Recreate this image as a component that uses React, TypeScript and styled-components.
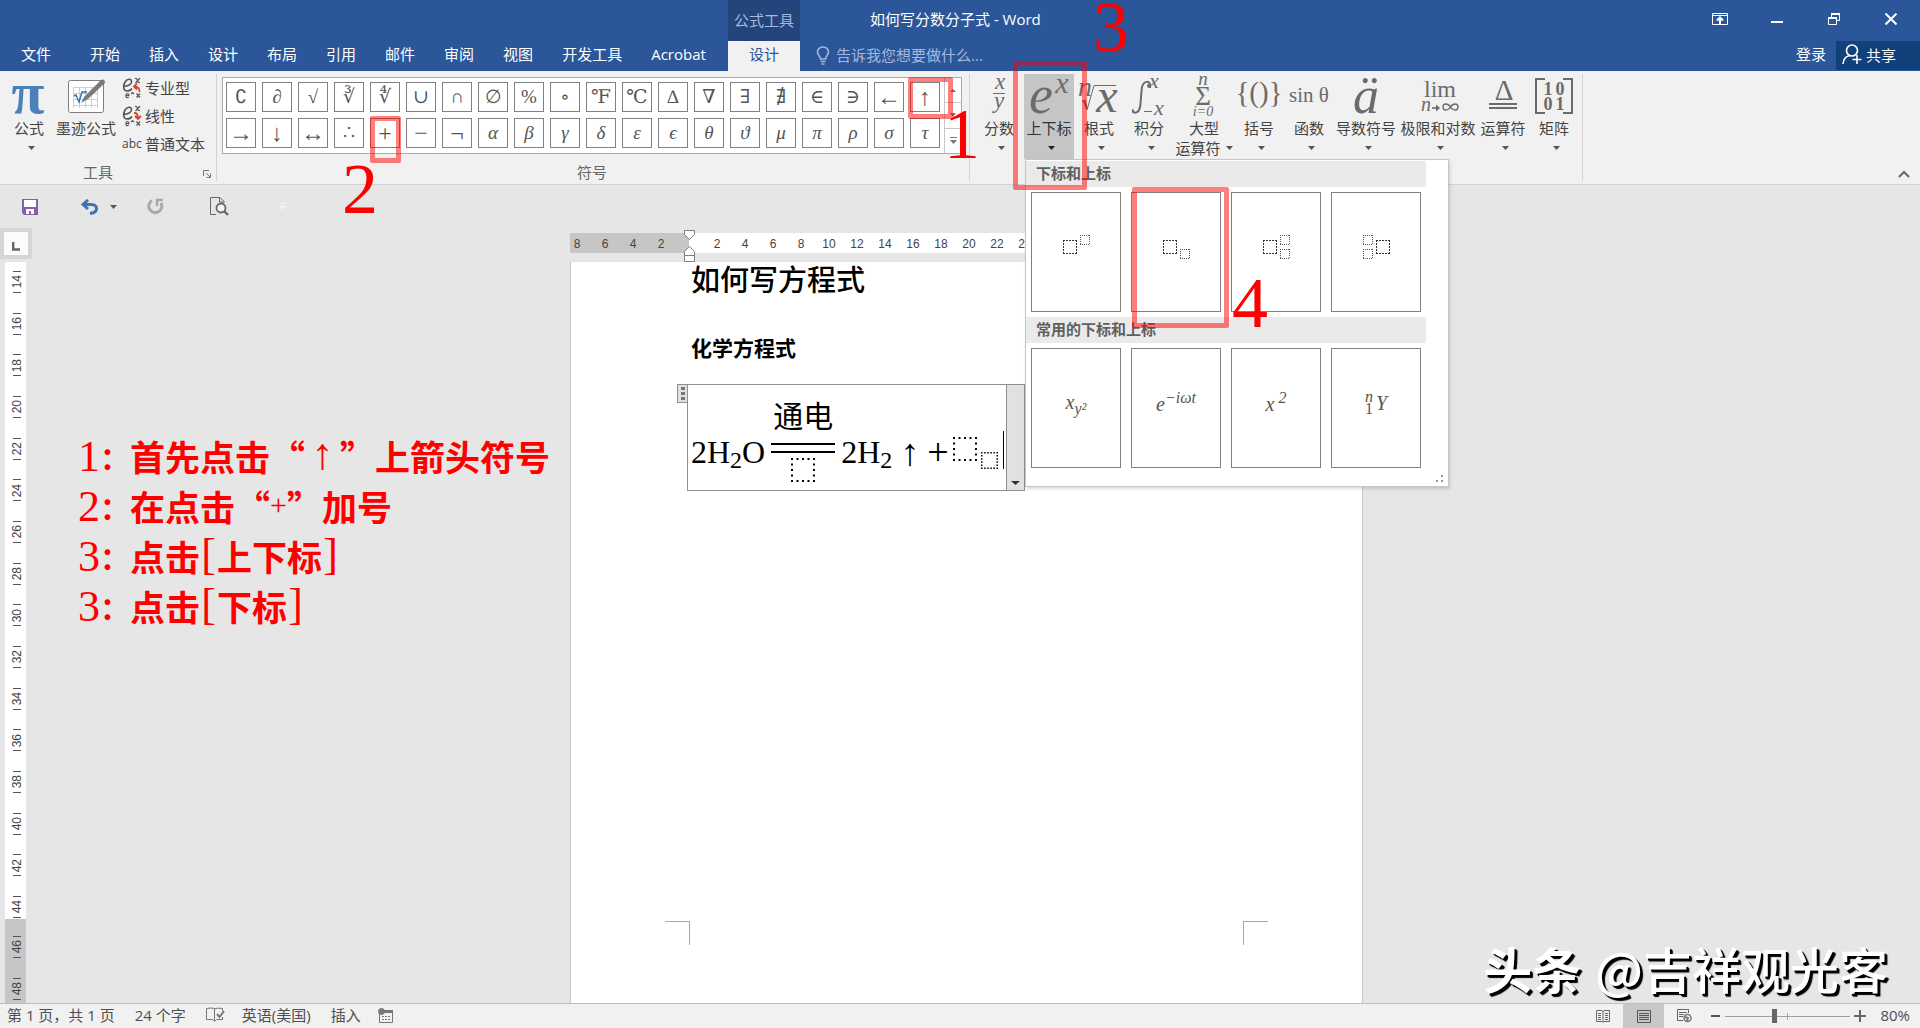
import React from "react";
import styled, { createGlobalStyle, css } from "styled-components";

const ui = '"Open Sans", "Noto Sans CJK SC", sans-serif';
const serif = '"Liberation Serif", "Noto Sans CJK SC", serif';
const math = '"Liberation Serif", "DejaVu Serif", serif';

const Global = createGlobalStyle`
  *, *::before, *::after { box-sizing: border-box; }
  body { margin: 0; background: #e6e6e6; font-family: ${ui}; font-size: 15px; line-height: 20px; color: #444; }
  button { font: inherit; color: inherit; background: none; border: 0; padding: 0; cursor: default; }
  svg { display: block; }
`;

const Shell = styled.div`
  position: relative;
  display: flex;
  flex-direction: column;
  min-height: 100vh;
  overflow: hidden;
`;

/* ---------- title bar and tabs ---------- */

const Header = styled.header`
  display: flex;
  height: 71px;
  flex: none;
  background: #2b579a;
  color: #fff;
`;
const Tabs = styled.nav`
  display: flex;
  align-items: flex-end;
  gap: 1px;
  width: 728px;
  flex: none;
`;
const Tab = styled.button<{ $file?: boolean }>`
  height: 30px;
  padding: 0 14px 4px;
  white-space: nowrap;
  ${(p) => p.$file && css`width: 72px; margin-right: 3px;`}
`;
const ContextGroup = styled.div`
  display: flex;
  flex-direction: column;
  width: 72px;
  flex: none;
`;
const ContextName = styled.div`
  height: 41px;
  line-height: 41px;
  text-align: center;
  background: #23457b;
  color: #a3b9dc;
`;
const ActiveTab = styled.button`
  height: 30px;
  padding-bottom: 4px;
  background: #f1f1f1;
  color: #2b579a;
`;
const HeaderRest = styled.div`
  flex: 1;
  display: flex;
  flex-direction: column;
`;
const TitleRow = styled.div`
  display: flex;
  height: 41px;
  padding-left: 70px;
  justify-content: space-between;
`;
const DocTitle = styled.h1`
  margin: 0;
  font-size: 15px;
  font-weight: 400;
  line-height: 38px;
`;
const WindowButtons = styled.div`
  display: flex;
  padding-right: 1px;
`;
const WindowButton = styled.button`
  display: grid;
  place-items: center;
  width: 57px;
  height: 38px;
`;
const TellRow = styled.div`
  display: flex;
  height: 30px;
  padding-left: 16px;
`;
const Tell = styled.button`
  display: flex;
  align-items: center;
  gap: 6px;
  padding-bottom: 2px;
  color: #a3b9dc;
  margin-right: auto;
`;
const SignIn = styled.button`
  padding: 0 10px 4px;
`;
const Share = styled.button`
  display: flex;
  align-items: center;
  gap: 4px;
  width: 84px;
  height: 29px;
  padding: 0 0 2px 6px;
  background: #12407a;
`;

/* ---------- ribbon ---------- */

const Ribbon = styled.div`
  display: flex;
  flex: none;
  height: 114px;
  padding: 3px 0;
  background: #f1f1f1;
  border-bottom: 1px solid #d2d2d2;
`;
const Group = styled.section<{ $pad: string; $w?: number }>`
  display: flex;
  flex-direction: column;
  justify-content: space-between;
  flex: none;
  border-right: 1px solid #d2d2d2;
  padding: ${(p) => p.$pad};
  ${(p) => p.$w && css`width: ${p.$w}px;`}
`;
const GroupRow = styled.div`
  display: flex;
`;
const GroupName = styled.div<{ $end?: number }>`
  position: relative;
  padding-right: ${(p) => p.$end || 0}px;
  text-align: center;
  color: #666;
  line-height: 18px;
`;
const Launcher = styled.button`
  position: absolute;
  right: 5px;
  bottom: 3px;
`;
const Big = styled.button<{ $w: number; $on?: boolean }>`
  display: flex;
  flex-direction: column;
  align-items: center;
  width: ${(p) => p.$w}px;
  height: 85px;
  padding-top: 2px;
  background: ${(p) => (p.$on ? "#c5c5c5" : "transparent")};
  color: ${(p) => (p.$on ? "#333" : "#444")};
  white-space: nowrap;
`;
const BigLabel = styled.span`
  display: flex;
  height: 22px;
  padding-bottom: 2px;
  align-items: center;
`;
const SecondLine = styled.span`
  display: flex;
  gap: 5px;
  height: 16px;
  align-items: center;
`;
const CaretLine = styled(SecondLine)`
  padding-left: 4px;
`;
const SmallList = styled.div`
  display: flex;
  flex-direction: column;
  padding-left: 4px;
`;
const Small = styled.button`
  display: flex;
  align-items: center;
  gap: 3px;
  height: 28px;
  white-space: nowrap;
`;
const SmallIcon = styled.span`
  width: 20px;
  font-size: 12px;
`;
const Gallery = styled.div`
  display: flex;
  border: 1px solid #ababab;
  background: #fff;
  height: 77px;
`;
const SymbolGrid = styled.div`
  display: grid;
  grid-template-columns: repeat(20, 30px);
  grid-auto-rows: 30px;
  gap: 6px;
  padding: 4px 4px 4px 3px;
`;
const SymbolCell = styled.button<{ $it?: boolean; $large?: boolean }>`
  border: 1px solid #7f7f7f;
  background: #fff;
  color: #555;
  font: ${(p) => (p.$it ? "italic" : "normal")} ${(p) => (p.$large ? 24 : 19)}px/26px ${math};
`;
const GalleryBar = styled.div`
  display: flex;
  flex-direction: column;
  width: 17px;
  border-left: 1px solid #c6c6c6;
`;
const BarButton = styled.button`
  flex: 1;
  display: grid;
  place-items: center;
  & + & { border-top: 1px solid #c6c6c6; }
`;
const Anchor = styled.div`
  position: relative;
`;
const Collapse = styled.button`
  margin: auto 10px 3px auto;
`;

/* ---------- drop-down panel ---------- */

const Panel = styled.div`
  position: absolute;
  z-index: 2;
  left: 1px;
  top: 85px;
  width: 424px;
  height: 328px;
  padding: 1px 0 0;
  background: #fff;
  border: 1px solid #c6c6c6;
  box-shadow: 1px 2px 3px rgba(0, 0, 0, 0.15);
`;
const PanelHead = styled.h2`
  margin: 0 22px 0 0;
  padding-left: 10px;
  height: 26px;
  background: #eaeaea;
  color: #5f5f5f;
  font-size: 15px;
  font-weight: 700;
  line-height: 25px;
`;
const Cards = styled.div`
  display: grid;
  grid-template-columns: repeat(4, 90px);
  gap: 10px;
  padding: 5px;
`;
const Card = styled.button`
  display: flex;
  align-items: center;
  justify-content: center;
  gap: 3px;
  height: 120px;
  padding-bottom: 10px;
  border: 1px solid #7f7f7f;
  color: #555;
  font: italic 20px/24px ${math};
  sup, sub { font-size: 16px; line-height: 16px; }
`;
const Scripts = styled.span<{ $at: "flex-start" | "flex-end" | "space-between" }>`
  display: flex;
  flex-direction: column;
  justify-content: ${(p) => p.$at};
  height: 24px;
  font-size: 16px;
  line-height: 12px;
  font-style: normal;
`;
const Grip = styled.span`
  position: absolute;
  right: 4px;
  bottom: 3px;
`;

/* ---------- quick access bar ---------- */

const Quick = styled.div`
  display: flex;
  flex: none;
  align-items: center;
  height: 43px;
  padding-left: 21px;
`;
const QuickButton = styled.button<{ $gap: number }>`
  display: flex;
  align-items: center;
  gap: 11px;
  margin-right: ${(p) => p.$gap}px;
`;

/* ---------- work area ---------- */

const Work = styled.div`
  display: flex;
  flex: 1;
  padding-right: 19px;
`;
const Side = styled.div`
  display: flex;
  flex-direction: column;
  width: 32px;
  flex: none;
`;
const TabStop = styled.button`
  display: grid;
  place-items: center;
  width: 32px;
  height: 31px;
  margin-bottom: 3px;
  background: #fbfbfb;
  border: 4px solid #d6d6d6;
`;
const RulerV = styled.div<{ $edge?: boolean }>`
  display: flex;
  flex-direction: column;
  align-items: center;
  justify-content: space-between;
  width: 21px;
  margin-left: 5px;
  ${(p) =>
    p.$edge
      ? css`height: 84px; padding: 17px 0 3px; background: #c6c6c6;`
      : css`flex: 1; padding: 9px 0 1px; background: #fff;`}
`;
const MarkV = styled.span`
  display: flex;
  align-items: center;
  justify-content: center;
  width: 8px;
  height: 22px;
  margin-left: 3px;
  border: solid #555;
  border-width: 1px 0;
  font: 12px/12px "Liberation Sans", sans-serif;
  span { writing-mode: vertical-rl; transform: rotate(180deg); }
`;
const Canvas = styled.main`
  display: flex;
  flex-direction: column;
  width: 793px;
  margin: 5px auto 0;
`;
const RulerH = styled.div`
  display: flex;
  flex: none;
  height: 20px;
  margin-bottom: 9px;
`;
const RulerPart = styled.div<{ $edge?: boolean }>`
  display: flex;
  overflow: hidden;
  color: #444;
  font: 12px/22px "Liberation Sans", sans-serif;
  ${(p) =>
    p.$edge
      ? css`width: 119px; flex: none; justify-content: flex-end; padding-right: 14px; background: #c6c6c6;`
      : css`flex: 1; padding-left: 14px; background: #fff;`}
`;
const MarkH = styled.span`
  width: 28px;
  flex: none;
  text-align: center;
`;
const Indent = styled.span`
  position: absolute;
  left: 114px;
  top: -3px;
`;
const RulerWrap = styled.div`
  position: relative;
`;
const Sheet = styled.article`
  display: flex;
  flex: 1;
  flex-direction: column;
  background: #fff;
  border: solid #c6c6c6;
  border-width: 0 1px;
  color: #000;
  font-family: ${serif};
`;
const SheetBody = styled.div`
  padding: 0 120px;
`;
const H1 = styled.h2`
  margin: 0 0 38px;
  font-size: 29px;
  font-weight: 500;
  line-height: 38px;
`;
const H2 = styled.h3`
  margin: 0 0 24px;
  font-size: 21px;
  font-weight: 700;
  line-height: 22px;
`;
const Equation = styled.div`
  display: flex;
  width: 348px;
  height: 107px;
  margin-left: -14px;
`;
const Handle = styled.button`
  display: flex;
  flex-direction: column;
  align-items: center;
  justify-content: space-evenly;
  width: 10px;
  height: 19px;
  background: #e1e1e1;
  border: 1px solid #8f8f8f;
  border-right: 0;
  i { width: 4px; height: 3px; background: #777; }
`;
const EqBox = styled.div`
  display: flex;
  flex: 1;
  border: 1px solid #8f8f8f;
`;
const EqText = styled.div`
  display: flex;
  flex: 1;
  align-items: flex-start;
  padding: 16px 0 0 3px;
  font-size: 32px;
  line-height: 36px;
  white-space: nowrap;
`;
const Term = styled.span<{ $l?: number; $big?: boolean }>`
  margin: 33px 0 0 ${(p) => p.$l || 0}px;
  ${(p) => p.$big && css`font-size: 38px;`}
  sub { font-size: 24px; line-height: 24px; vertical-align: -5px; }
`;
const Over = styled.span`
  display: flex;
  flex-direction: column;
  align-items: center;
  width: 64px;
  margin-left: 6px;
  font-size: 30px;
  line-height: 32px;
`;
const DoubleBar = styled.span`
  width: 64px;
  height: 10px;
  margin: 10px 0 5px;
  border: solid #000;
  border-width: 2px 0;
`;
const TermSlots = styled.span`
  display: flex;
  align-items: flex-end;
  gap: 4px;
  height: 32px;
  margin: 36px 0 0 4px;
`;
const MainSlot = styled.span`
  align-self: flex-start;
`;
const TextCursor = styled.span`
  width: 1px;
  height: 38px;
  margin: 30px 2px 0 auto;
  background: #000;
`;
const EqMenu = styled.button`
  display: flex;
  align-items: flex-end;
  justify-content: center;
  width: 18px;
  padding-bottom: 5px;
  background: #e1e1e1;
  border-left: 1px solid #8f8f8f;
`;
const Crops = styled.div`
  display: flex;
  justify-content: space-between;
  margin-top: auto;
  padding: 0 94px 58px;
`;
const Crop = styled.i<{ $side: "left" | "right" }>`
  width: 25px;
  height: 24px;
  border-top: 1px solid #a8a8a8;
  border-${(p) => p.$side}: 1px solid #a8a8a8;
`;

/* ---------- status bar ---------- */

const Status = styled.footer`
  display: flex;
  flex: none;
  align-items: center;
  height: 25px;
  padding: 0 10px 0 7px;
  background: #f1f1f1;
  border-top: 1px solid #bdbdbd;
  color: #4f4f4f;
`;
const StatusItem = styled.button<{ $gap?: number }>`
  margin-right: ${(p) => (p.$gap === undefined ? 20 : p.$gap)}px;
  padding-bottom: 2px;
  white-space: nowrap;
`;
const Views = styled.div`
  display: flex;
  align-self: stretch;
  margin-left: auto;
`;
const View = styled.button<{ $on?: boolean }>`
  display: grid;
  place-items: center;
  width: 41px;
  background: ${(p) => (p.$on ? "#c8c8c8" : "transparent")};
`;
const Zoom = styled.div`
  display: flex;
  align-items: center;
  gap: 4px;
  margin: 0 14px 0 6px;
`;
const Range = styled.input`
  appearance: none;
  width: 125px;
  height: 16px;
  margin: 0;
  background:
    linear-gradient(#a0a0a0, #a0a0a0) center / 1px 7px no-repeat,
    linear-gradient(#a0a0a0, #a0a0a0) center / 100% 1px no-repeat;
  &::-webkit-slider-thumb { appearance: none; width: 5px; height: 14px; background: #666; }
`;

/* ---------- red call-outs laid over the window ---------- */

const Frame = styled.div<{ $x: number; $y: number; $w: number; $h: number }>`
  position: absolute;
  z-index: 3;
  left: ${(p) => p.$x}px;
  top: ${(p) => p.$y}px;
  width: ${(p) => p.$w}px;
  height: ${(p) => p.$h}px;
  border: 5px solid rgba(255, 0, 0, 0.5);
  border-radius: 2px;
  pointer-events: none;
`;
const Numeral = styled.div<{ $x: number; $y: number }>`
  position: absolute;
  z-index: 4;
  left: ${(p) => p.$x}px;
  top: ${(p) => p.$y}px;
  width: 36px;
  text-align: center;
  color: #f00;
  font: 72px/54px "Liberation Serif", serif;
  pointer-events: none;
`;
const Notes = styled.ol`
  position: absolute;
  left: 78px;
  top: 431px;
  margin: 0;
  padding: 0;
  list-style: none;
  color: #f00;
  font: 700 35px/50px "Noto Sans CJK SC", sans-serif;
`;
const Note = styled.li`
  display: flex;
  height: 50px;
  white-space: nowrap;
`;
const NoteNo = styled.span`
  display: flex;
  width: 52px;
  font-size: 30px;
  b { font: 400 44px/52px "Liberation Serif", serif; }
`;
const Thin = styled.span<{ $w: number; $s?: number }>`
  width: ${(p) => p.$w}px;
  text-align: center;
  font: 400 ${(p) => p.$s || 44}px/48px "Liberation Serif", serif;
`;
const Watermark = styled.div`
  position: absolute;
  right: 32px;
  bottom: 30px;
  display: flex;
  gap: 14px;
  color: #fff;
  font: 500 49px/60px "Noto Sans CJK SC", sans-serif;
  text-shadow: 2px 2px 0 #000, 3px 3px 1px #000;
  b { font-weight: 700; }
`;

/* ---------- drawings ---------- */

const Caret = ({ c = "#555", w = 7 }: { c?: string; w?: number }) => (
  <svg width={w} height={4} viewBox="0 0 8 4" preserveAspectRatio="none" aria-hidden="true"><path d="M0 0H8L4 4Z" fill={c} /></svg>
);

/* an empty dotted place in a formula */
const Slot = ({ s, line = 1, dash, c = "#222" }: { s: number; line?: number; dash: string; c?: string }) => (
  <svg width={s} height={s} fill="none" aria-hidden="true">
    <path d={`M0 ${line / 2}H${s}M0 ${s - line / 2}H${s}M${line / 2} 0V${s}M${s - line / 2} 0V${s}`} stroke={c} strokeWidth={line} strokeDasharray={dash} />
  </svg>
);
const BaseSlot = () => <Slot s={14} line={1} dash="2 1" c="#333" />;
const TinySlot = () => <Slot s={10} dash="1 1" c="#555" />;
const DocSlot = () => <Slot s={24} line={2} dash="2 3.5" c="#000" />;

type T = { x: number; y: number; s: number; up?: boolean; bold?: boolean; children: React.ReactNode };
const G = ({ x, y, s, up, bold, children }: T) => (
  <text x={x} y={y} fontSize={s} fontStyle={up ? "normal" : "italic"} fontWeight={bold ? 700 : 400}
    fontFamily="Liberation Serif, DejaVu Serif, serif" textAnchor="middle" fill="#6b6b6b">{children}</text>
);
const Art = ({ w, children }: { w: number; children: React.ReactNode }) => (
  <svg width={w} height={42} viewBox={`0 0 ${w} 42`} fill="none" stroke="none" overflow="visible" aria-hidden="true">{children}</svg>
);
const gs = { stroke: "#6b6b6b", fill: "none" };

const structures: { label: string; second?: string; w: number; art: React.ReactNode; on?: boolean }[] = [
  { label: "分数", w: 50, art: <><G x={26} y={13} s={23}>x</G><path {...gs} d="M19 17.5H31" /><G x={25} y={32} s={23}>y</G></> },
  { label: "上下标", w: 50, on: true, art: <><G x={17} y={37} s={54}>e</G><G x={38} y={17} s={30}>x</G></> },
  { label: "根式", w: 50, art: <><G x={11} y={20} s={28}>n</G><path {...gs} d="M8 26L10 24" /><path {...gs} strokeWidth={2.4} d="M10 24L13 33" /><path {...gs} d="M13 34L20 9.5H42" /><G x={33} y={36} s={48}>x</G></> },
  { label: "积分", w: 50, art: <><path {...gs} strokeWidth={2} strokeLinecap="round" d="M26 9C26 5 20 4 18 11C17 17 17 26 16 31C15 37 10 38 9 35" /><path fill="#6b6b6b" d="M24 8a2 2 0 1 0 3 2zM8 33a2 2 0 1 1 0 4z" /><G x={30} y={12} s={22}>x</G><path {...gs} d="M20 35.5H28" /><G x={35} y={39} s={22}>x</G></> },
  { label: "大型", second: "运算符", w: 60, art: <><G x={29} y={9} s={19}>n</G><G x={29} y={29} s={27} up>Σ</G><G x={29} y={40} s={14}>i=0</G></> },
  { label: "括号", w: 50, art: <G x={25} y={26} s={29} up>{"{()}"}</G> },
  { label: "函数", w: 50, art: <G x={25} y={26} s={21} up>sin θ</G> },
  { label: "导数符号", w: 64, art: <G x={32} y={37} s={52}>ä</G> },
  { label: "极限和对数", w: 80, art: <><G x={42} y={21} s={24} up>lim</G><G x={28} y={35} s={20}>n</G><path {...gs} strokeWidth={1.6} d="M34 32H40" /><path fill="#6b6b6b" d="M38 28.5L42 32L38 35.5Z" /><path {...gs} strokeWidth={1.4} d="M52.500 31C55 27 60 27 60 31S55 35 52.500 31S45 27 45 31S50 35 52.500 31Z" /></> },
  { label: "运算符", w: 50, art: <><G x={26} y={24} s={29} up>Δ</G><path {...gs} strokeWidth={2} d="M11 28H39M11 32H39" /></> },
  { label: "矩阵", w: 52, art: <><path {...gs} strokeWidth={2} d="M17 3H8V37H17M35 3H44V37H35" /><G x={20} y={19} s={18} up bold>1</G><G x={32} y={19} s={18} up bold>0</G><G x={20} y={34} s={18} up bold>0</G><G x={32} y={34} s={18} up bold>1</G></> },
];

/* a large e with an exponent, an arrow and the linear form beneath it */
const ScriptIcon = ({ down }: { down?: boolean }) => (
  <svg width={20} height={22} viewBox="0 0 20 22" fill="none" stroke="#555" aria-hidden="true">
    <path strokeWidth={1.6} d="M2 9.500C7 9 10 7 9.500 4C9 1.500 5 1.500 3 5C.5 9.500 1.500 14 5 14C7 14 9 13 10 11.500" />
    <path strokeWidth={1.2} d="M13 1.500Q15 1 15.500 3.500T18 5.500M18 1L13.500 6" />
    <path strokeWidth={1.2} d="M4 18.500H7Q7 16.500 5.500 16.500T4 18.700T5.500 20.500L7 20M9 17L10.500 15.500L12 17M14.500 16.500L18 20.500M18 16.500L14.500 20.500" />
    {down
      ? <path d="M12 8H13Q16 8 16 14M13 11L16 14L19 11" stroke="#d24726" strokeWidth={1.800} />
      : <path d="M17.500 15Q18 9.500 12 9.500M15 6.500L12 9.500L15 12.500" stroke="#d24726" strokeWidth={1.800} />}
  </svg>
);

const symbols: string[] = [
  "∁", "∂", "√", "∛", "∜", "∪", "∩", "∅", "%", "∘", "℉", "℃", "∆", "∇", "∃", "∄", "∈", "∋", "←", "↑",
  "→", "↓", "↔", "∴", "+", "−", "¬", "α", "β", "γ", "δ", "ε", "ϵ", "θ", "ϑ", "μ", "π", "ρ", "σ", "τ",
];
const large = "←↑→↓↔+−¬";
const tabs = ["开始", "插入", "设计", "布局", "引用", "邮件", "审阅", "视图", "开发工具", "Acrobat"];
const evens = (a: number, b: number) => Array.from({ length: (b - a) / 2 + 1 }, (_, i) => a + i * 2);

const ScriptPanel = () => (
  <Panel>
    <PanelHead>下标和上标</PanelHead>
    <Cards>
      <Card aria-label="上标"><BaseSlot /><Scripts $at="flex-start"><TinySlot /></Scripts></Card>
      <Card aria-label="下标"><BaseSlot /><Scripts $at="flex-end"><TinySlot /></Scripts></Card>
      <Card aria-label="下标-上标"><BaseSlot /><Scripts $at="space-between"><TinySlot /><TinySlot /></Scripts></Card>
      <Card aria-label="左下标-上标"><Scripts $at="space-between"><TinySlot /><TinySlot /></Scripts><BaseSlot /></Card>
    </Cards>
    <PanelHead>常用的下标和上标</PanelHead>
    <Cards>
      <Card><span>x<sub>y²</sub></span></Card>
      <Card><span>e<sup>−iωt</sup></span></Card>
      <Card><span>x<sup> 2</sup></span></Card>
      <Card><Scripts $at="space-between"><i>n</i><span>1</span></Scripts><span>Y</span></Card>
    </Cards>
    <Grip><svg width={8} height={8} fill="#999"><path d="M5 0h2v2H5zM5 5h2v2H5zM0 5h2v2H0z" /></svg></Grip>
  </Panel>
);

export default function App() {
  return (
    <Shell>
      <Global />
      <Header>
        <Tabs>
          <Tab $file>文件</Tab>
          {tabs.map((t) => <Tab key={t}>{t}</Tab>)}
        </Tabs>
        <ContextGroup>
          <ContextName>公式工具</ContextName>
          <ActiveTab>设计</ActiveTab>
        </ContextGroup>
        <HeaderRest>
          <TitleRow>
            <DocTitle>如何写分数分子式 - Word</DocTitle>
            <WindowButtons>
              <WindowButton aria-label="功能区显示选项">
                <svg width={16} height={12} fill="none" stroke="#fff"><path d="M.5.5h15v11H.5zM.5 2.500h15" /><path d="M8 11V5M5 7.500L8 4.500l3 3" strokeWidth={2} /></svg>
              </WindowButton>
              <WindowButton aria-label="最小化"><svg width={12} height={12} fill="#fff"><path d="M0 8h12v2H0z" /></svg></WindowButton>
              <WindowButton aria-label="向下还原">
                <svg width={12} height={12} fill="none" stroke="#fff"><path d="M.5 5h8v6.500h-8zM3.500 4V1h8v6.500H9" /><path d="M0 5h9M3 1h9" strokeWidth={2} /></svg>
              </WindowButton>
              <WindowButton aria-label="关闭"><svg width={12} height={12} stroke="#fff" strokeWidth={2}><path d="M.5.5l11 11M11.500.5l-11 11" /></svg></WindowButton>
            </WindowButtons>
          </TitleRow>
          <TellRow>
            <Tell>
              <svg width={14} height={19} viewBox="0 0 14 19" fill="none" stroke="#a3b9dc" strokeWidth={1.6}><path d="M4.500 13C4.500 10 1.500 9.500 1.500 6a5.500 5 0 0 1 11 0C12.500 9.500 9.500 10 9.500 13ZM4.500 15.500h5M5.500 18h3" /></svg>
              告诉我您想要做什么...
            </Tell>
            <SignIn>登录</SignIn>
            <Share>
              <svg width={20} height={21} viewBox="0 0 20 21" fill="none" stroke="#fff" strokeWidth={1.6}><circle cx={10} cy={6.500} r={5.500} /><path d="M1 20C1.500 15 4 12 8 11.500M15 11v9M10.500 15.500h9" /></svg>
              共享
            </Share>
          </TellRow>
        </HeaderRest>
      </Header>

      <Ribbon>
        <Group $pad="0 0 0 4px" $w={217}>
          <GroupRow>
            <Big $w={50}>
              <Art w={50}><text x={24} y={37} fontSize={60} fontWeight={700} fontFamily="Liberation Serif" textAnchor="middle" fill="#4b80b8">π</text></Art>
              <BigLabel>公式</BigLabel>
              <CaretLine><Caret /></CaretLine>
            </Big>
            <Big $w={64}>
              <Art w={64}>
                <rect x={14.500} y={4.500} width={35} height={32} rx={2} fill="#fff" stroke="#7f7f7f" />
                <path d="M19.500 11V32M25.500 11V32M31.500 11V32M37.500 11V32M43.500 11V32M19 11.500H44M19 17.500H44M19 23.500H44M19 29.500H44" stroke="#bcd3ea" />
                <path d="M20 20L22 19L25 26L28 16H33" stroke="#2f6eb5" strokeWidth={1.4} />
                <path d="M27 27L30 21L47 4Q51 2 51 7L34 23Z" fill="#7a7a7a" />
              </Art>
              <BigLabel>墨迹公式</BigLabel>
            </Big>
            <SmallList>
              <Small><SmallIcon><ScriptIcon /></SmallIcon>专业型</Small>
              <Small><SmallIcon><ScriptIcon down /></SmallIcon>线性</Small>
              <Small><SmallIcon>abc</SmallIcon>普通文本</Small>
            </SmallList>
          </GroupRow>
          <GroupName $end={24}>
            工具
            <Launcher aria-label="公式选项"><svg width={8} height={8} fill="none" stroke="#777"><path d="M.5 6V.5H6M3 3l4 4M7.500 3.500v4h-4" /></svg></Launcher>
          </GroupName>
        </Group>

        <Group $pad="3px 7px 0 5px">
          <Gallery>
            <SymbolGrid>
              {symbols.map((s, i) => <SymbolCell key={s} $it={i > 26 || i === 1} $large={large.includes(s)}>{s}</SymbolCell>)}
            </SymbolGrid>
            <GalleryBar>
              <BarButton aria-label="上一行"><svg width={6} height={3} fill="#777"><path d="M0 3h6L3 0z" /></svg></BarButton>
              <BarButton aria-label="下一行"><Caret w={6} c="#777" /></BarButton>
              <BarButton aria-label="其他"><svg width={7} height={7} fill="#777"><path d="M0 0h7v1H0zM0 3h7L3.500 7z" /></svg></BarButton>
            </GalleryBar>
          </Gallery>
          <GroupName>符号</GroupName>
        </Group>

        <Group $pad="0 2px 0 4px">
          <GroupRow>
            {structures.map((s) => (
              <Anchor key={s.label}>
                <Big $w={s.w} $on={s.on}>
                  <Art w={s.w}>{s.art}</Art>
                  <BigLabel>{s.label}</BigLabel>
                  {s.second
                    ? <SecondLine>{s.second}<Caret /></SecondLine>
                    : <CaretLine><Caret c={s.on ? "#222" : "#555"} /></CaretLine>}
                </Big>
                {s.on && <ScriptPanel />}
              </Anchor>
            ))}
          </GroupRow>
        </Group>
        <Collapse aria-label="折叠功能区"><svg width={12} height={8} fill="none" stroke="#666" strokeWidth={2}><path d="M1 7l5-5 5 5" /></svg></Collapse>
      </Ribbon>

      <Quick>
        <QuickButton $gap={42} aria-label="保存">
          <svg width={17} height={17}><path d="M1 1h16v16H3l-2-2z" fill="#8660a9" /><path d="M3 2h12v7H3zM5 11h8v5h-3v-3H8v3H5z" fill="#fff" /></svg>
        </QuickButton>
        <QuickButton $gap={30} aria-label="撤消">
          <svg width={19} height={16} fill="none" stroke="#3f74b3" strokeWidth={3}><path d="M3 5.500H11Q17 6 16.500 10T10 14.500M8 1L3 5.500L8 10" /></svg>
          <Caret />
        </QuickButton>
        <QuickButton $gap={46} aria-label="重复">
          <svg width={17} height={17} fill="none" stroke="#a9a9a9" strokeWidth={3}><path d="M5 2.500A6.500 6.500 0 1 0 14 5" /><path d="M10 8V2h6" strokeWidth={2.500} /></svg>
        </QuickButton>
        <QuickButton $gap={50} aria-label="打印预览">
          <svg width={19} height={19} fill="none" stroke="#666"><path d="M6 17.500H.5V.5H10l4 4V6M9.500.5V5H14" /><circle cx={11} cy={11} r={4.500} strokeWidth={1.800} fill="#f5f5f5" /><path d="M14 14l4 4" strokeWidth={2.400} /></svg>
        </QuickButton>
        <QuickButton $gap={0} aria-label="自定义快速访问工具栏"><svg width={7} height={7} fill="#f4f4f4"><path d="M0 0h7v1H0zM0 3h7L3.500 7z" /></svg></QuickButton>
      </Quick>

      <Work>
        <Side>
          <TabStop aria-label="制表符"><svg width={8} height={14} fill="none" stroke="#666" strokeWidth={2.400}><path d="M1.200 5v7.500H8" /></svg></TabStop>
          <RulerV>{evens(14, 44).map((n) => <MarkV key={n}><span>{n}</span></MarkV>)}</RulerV>
          <RulerV $edge>{evens(46, 48).map((n) => <MarkV key={n}><span>{n}</span></MarkV>)}</RulerV>
        </Side>
        <Canvas>
          <RulerWrap>
            <RulerH>
              <RulerPart $edge>{[8, 6, 4, 2].map((n) => <MarkH key={n}>{n}</MarkH>)}</RulerPart>
              <RulerPart>{evens(2, 46).map((n) => <MarkH key={n}>{n}</MarkH>)}</RulerPart>
            </RulerH>
            <Indent>
              <svg width={11} height={32} fill="#fff" stroke="#7f7f7f"><path d="M.5.5h10v4l-5 5-5-5zM.5 25.500v-4l5-5 5 5v4zM.5 25.500h10v6H.5z" /></svg>
            </Indent>
          </RulerWrap>
          <Sheet>
            <SheetBody>
              <H1>如何写方程式</H1>
              <H2>化学方程式</H2>
              <Equation>
                <Handle aria-label="移动公式"><i /><i /><i /></Handle>
                <EqBox>
                  <EqText>
                    <Term>2H<sub>2</sub>O</Term>
                    <Over>通电<DoubleBar /><DocSlot /></Over>
                    <Term $l={6}>2H<sub>2</sub></Term>
                    <Term $l={8} $big>↑</Term>
                    <Term $l={8} $big>+</Term>
                    <TermSlots><MainSlot><DocSlot /></MainSlot><Slot s={17} dash="1.500 1.600" c="#000" line={1.5} /></TermSlots>
                    <TextCursor />
                  </EqText>
                  <EqMenu aria-label="公式选项"><Caret w={9} c="#333" /></EqMenu>
                </EqBox>
              </Equation>
            </SheetBody>
            <Crops><Crop $side="right" /><Crop $side="left" /></Crops>
          </Sheet>
        </Canvas>
      </Work>

      <Status>
        <StatusItem>第 1 页，共 1 页</StatusItem>
        <StatusItem>24 个字</StatusItem>
        <StatusItem $gap={17} aria-label="校对">
          <svg width={19} height={16} fill="none" stroke="#777"><path d="M8.500 13.500V1.500Q5 .5.5 1.500v11h6l2 2 2-2h6V10M8.500 2Q11 .5 16.500 1.500V4" /><path d="M11 7l2.500 3L18 4" strokeWidth={2} /></svg>
        </StatusItem>
        <StatusItem>英语(美国)</StatusItem>
        <StatusItem $gap={17}>插入</StatusItem>
        <StatusItem aria-label="宏录制">
          <svg width={16} height={15} fill="none" stroke="#777"><path d="M1.500 6v8.500h13V2.500H7" /><path d="M4 8.500h9M4 11.500h9" strokeDasharray="2 1" /><path d="M6 3.500h9" strokeWidth={3} /><circle cx={3.500} cy={3.500} r={3} fill="#777" /></svg>
        </StatusItem>
        <Views>
          <View aria-label="阅读视图"><svg width={14} height={13} fill="none" stroke="#666"><path d="M.5.5H6L7 2 8 .5h5.500v11H8L7 12.500 6 11.500H.5zM7 2v10M2 3.500h3M2 5.500h3M2 7.500h3M2 9.500h3M9 3.500h3M9 5.500h3M9 7.500h3M9 9.500h3" /></svg></View>
          <View $on aria-label="页面视图"><svg width={14} height={13} fill="none" stroke="#555"><path d="M.5.5h13v12H.5zM2 3.500h10M2 5.500h10M2 7.500h10M2 9.500h10" /></svg></View>
          <View aria-label="Web 版式视图"><svg width={15} height={14} fill="none" stroke="#666"><path d="M6 11.500H.5V.5h11V4M2 3.500h8M2 5.500h5M2 7.500h4" /><circle cx={10.500} cy={9} r={3.500} fill="#fff" stroke="#777" strokeWidth={1.500} /><path d="M8 8l3 1-1 3" stroke="#777" strokeWidth={2} /></svg></View>
        </Views>
        <Zoom>
          <button aria-label="缩小"><svg width={10} height={10} fill="#555"><path d="M0 4h9v2H0z" /></svg></button>
          <Range type="range" min={0} max={100} defaultValue={39} aria-label="显示比例" />
          <button aria-label="放大"><svg width={12} height={12} fill="#666"><path d="M0 5h5V0h2v5h5v2H7v5H5V7H0z" /></svg></button>
        </Zoom>
        <StatusItem $gap={0}>80%</StatusItem>
      </Status>

      <Frame $x={908} $y={77} $w={45} $h={42} />
      <Frame $x={370} $y={116} $w={31} $h={47} />
      <Frame $x={1013} $y={61} $w={74} $h={129} />
      <Frame $x={1132} $y={187} $w={97} $h={141} />
      <Numeral $x={944} $y={107}>1</Numeral>
      <Numeral $x={342} $y={162}>2</Numeral>
      <Numeral $x={1093} $y={0}>3</Numeral>
      <Numeral $x={1232} $y={276}>4</Numeral>
      <Notes>
        <Note><NoteNo><b>1</b>：</NoteNo>首先点击“<Thin $w={35}>↑</Thin>”上箭头符号</Note>
        <Note><NoteNo><b>2</b>：</NoteNo>在点击“<Thin $w={17} $s={30}>+</Thin>”加号</Note>
        <Note><NoteNo><b>3</b>：</NoteNo>点击<Thin $w={17}>[</Thin>上下标<Thin $w={17}>]</Thin></Note>
        <Note><NoteNo><b>3</b>：</NoteNo>点击<Thin $w={17}>[</Thin>下标<Thin $w={17}>]</Thin></Note>
      </Notes>
      <Watermark><b>头条</b><span>@吉祥观光客</span></Watermark>
    </Shell>
  );
}
